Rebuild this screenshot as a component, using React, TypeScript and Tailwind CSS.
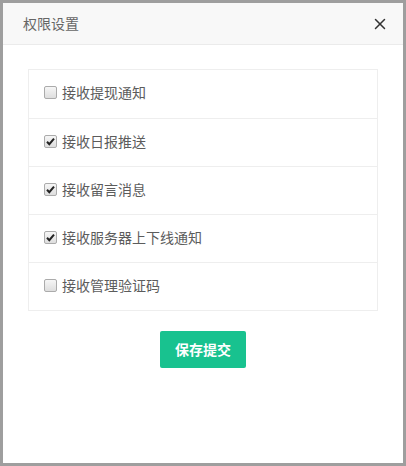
import { X } from "lucide-react";

const items = [
  { label: "接收提现通知", checked: false },
  { label: "接收日报推送", checked: true },
  { label: "接收留言消息", checked: true },
  { label: "接收服务器上下线通知", checked: true },
  { label: "接收管理验证码", checked: false },
];

function Box({ checked }: { checked: boolean }) {
  return (
    <span className="relative inline-block h-[13px] w-[13px] shrink-0 rounded-[2px] border border-[#ababab] bg-gradient-to-b from-[#f6f6f6] to-[#dedede]">
      {checked && (
        <svg viewBox="0 0 13 13" className="absolute -left-px -top-px h-[13px] w-[13px]">
          <path d="M3 6.8 L5.3 9.2 L10 3.6" fill="none" stroke="#222" strokeWidth="2" />
        </svg>
      )}
    </span>
  );
}

export default function App() {
  return (
    <div
      className="flex h-[466px] w-[406px] flex-col border-[3px] border-[#9e9e9e] bg-white"
      style={{ fontFamily: '"Noto Sans CJK SC", "Noto Sans", sans-serif' }}
    >
      <div className="flex h-[42px] shrink-0 items-center justify-between border-b border-[#ebebeb] bg-[#f8f8f8] pl-[20px] pr-[14px]">
        <span className="text-[14px] text-[#666]">权限设置</span>
        <X className="h-[18px] w-[18px] text-[#333]" strokeWidth={2} />
      </div>
      <div className="flex flex-col items-center px-[25px] pt-[24px]">
        <div className="w-full border border-[#eeeeee]">
          {items.map((it, i) => (
            <div
              key={it.label}
              className={`flex h-[48px] items-center gap-[5px] pb-[3px] pl-[15px] ${i > 0 ? "border-t border-[#eeeeee]" : ""}`}
            >
              <Box checked={it.checked} />
              <span className="text-[14px] text-[#5c5c5c]">{it.label}</span>
            </div>
          ))}
        </div>
        <button className="mt-[20px] h-[37px] w-[86px] rounded-[2px] bg-[#18c28f] text-[14px] font-semibold text-white">
          保存提交
        </button>
      </div>
    </div>
  );
}
